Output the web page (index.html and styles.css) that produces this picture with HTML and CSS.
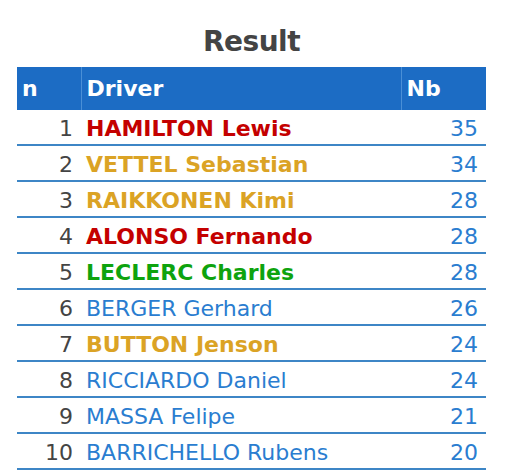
FILE: index.html
```html
<!DOCTYPE html>
<html>
<head>
<meta charset="utf-8">
<link rel="stylesheet" href="styles.css">
</head>
<body>
<div class="wrap">
  <h1 class="title">Result</h1>
  <table class="result">
    <colgroup><col class="w-n"><col class="w-d"><col class="w-nb"></colgroup>
    <thead>
      <tr><th>n</th><th>Driver</th><th>Nb</th></tr>
    </thead>
    <tbody>
      <tr><td class="c-n">1</td><td class="c-d red">HAMILTON Lewis</td><td class="c-nb">35</td></tr>
      <tr><td class="c-n">2</td><td class="c-d gold">VETTEL Sebastian</td><td class="c-nb">34</td></tr>
      <tr><td class="c-n">3</td><td class="c-d gold">RAIKKONEN Kimi</td><td class="c-nb">28</td></tr>
      <tr><td class="c-n">4</td><td class="c-d red">ALONSO Fernando</td><td class="c-nb">28</td></tr>
      <tr><td class="c-n">5</td><td class="c-d green">LECLERC Charles</td><td class="c-nb">28</td></tr>
      <tr><td class="c-n">6</td><td class="c-d blue">BERGER Gerhard</td><td class="c-nb">26</td></tr>
      <tr><td class="c-n">7</td><td class="c-d gold">BUTTON Jenson</td><td class="c-nb">24</td></tr>
      <tr><td class="c-n">8</td><td class="c-d blue">RICCIARDO Daniel</td><td class="c-nb">24</td></tr>
      <tr><td class="c-n">9</td><td class="c-d blue">MASSA Felipe</td><td class="c-nb">21</td></tr>
      <tr><td class="c-n">10</td><td class="c-d blue">BARRICHELLO Rubens</td><td class="c-nb">20</td></tr>
    </tbody>
  </table>
</div>
</body>
</html>
```

FILE: styles.css
```css
html, body {
  margin: 0;
  padding: 0;
  background: #ffffff;
}
body {
  font-family: "DejaVu Sans", Verdana, sans-serif;
}
.wrap {
  padding: 24px 0 0 17px;
  width: 469px;
}
.title {
  margin: 0 0 7px 0;
  text-align: center;
  font-size: 28px;
  line-height: 36px;
  font-weight: bold;
  color: #444444;
  letter-spacing: -0.5px;
}
.result {
  width: 469px;
  table-layout: fixed;
  border-collapse: collapse;
  font-size: 22px;
}
.w-n { width: 64px; }
.w-d { width: 320px; }
.w-nb { width: 85px; }
.result th {
  background: #1c6cc4;
  color: #ffffff;
  text-align: left;
  font-weight: bold;
  height: 43px;
  padding: 0 5px;
  border-left: 1px solid #4a8fd6;
}
.result th:first-child { border-left: none; }
.result td {
  height: 30px;
  line-height: 26px;
  padding: 4px 8px 0 5px;
  border-bottom: 2px solid #3d86c6;
  white-space: nowrap;
}
td.c-n {
  text-align: right;
  color: #444444;
}
td.c-nb {
  text-align: right;
  color: #2a7dd0;
}
.red { color: #c40000; font-weight: bold; }
.gold { color: #dba325; font-weight: bold; }
.green { color: #0ea30e; font-weight: bold; }
.blue { color: #2a7dd0; }
```
